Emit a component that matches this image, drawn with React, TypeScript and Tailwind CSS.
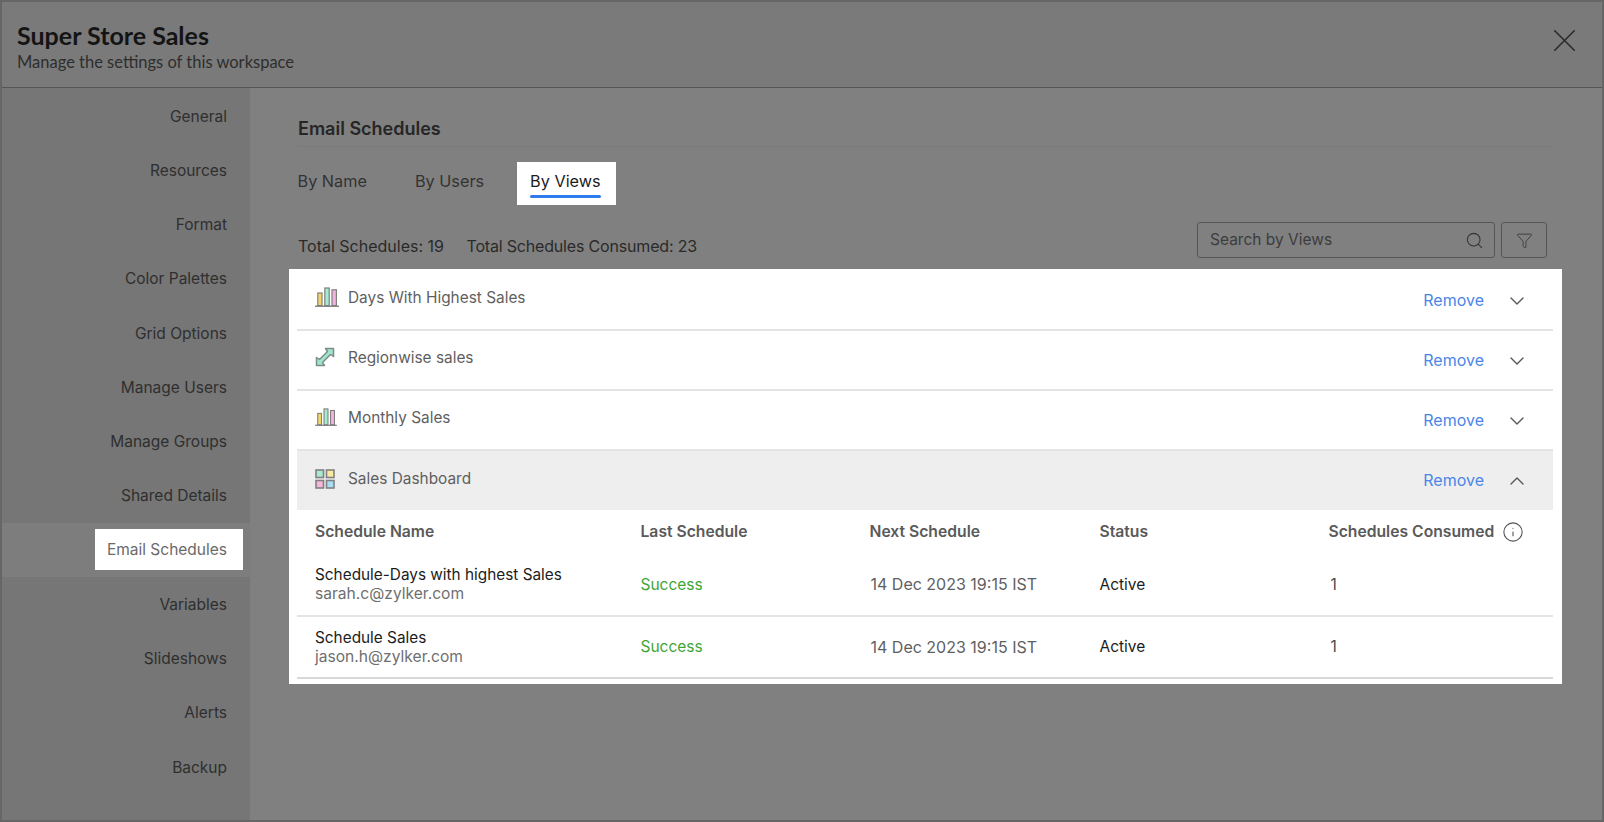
import { ChevronDown, ChevronUp, Funnel, Info, Search, X } from 'lucide-react'

const menu = ['General', 'Resources', 'Format', 'Color Palettes', 'Grid Options', 'Manage Users', 'Manage Groups', 'Shared Details', 'Email Schedules', 'Variables', 'Slideshows', 'Alerts', 'Backup']

function BarsIcon({ small }: { small?: boolean }) {
  return (
    <svg viewBox="0 0 24 20" className={small ? 'w-[22px] h-[18px]' : 'w-[24px] h-[20px]'}>
      <rect x="2.8" y="6" width="4.2" height="12.6" fill="#f4d76a" stroke="#808080" strokeWidth="1.2" />
      <rect x="9.8" y="1" width="4.4" height="17.6" fill="#a4ecd0" stroke="#808080" strokeWidth="1.2" />
      <rect x="17" y="2.8" width="4.4" height="15.8" fill="#f2b4dc" stroke="#808080" strokeWidth="1.2" />
      <path d="M0 19.2H24" stroke="#777" strokeWidth="1.3" />
    </svg>
  )
}

function ArrowIcon() {
  return (
    <svg viewBox="0 0 20 20" className="w-[20px] h-[20px]">
      <path d="M10.5 1.5H18.5V9.5L15.5 7.5L7.5 15.5L9.5 18.5H1.5V10.5L4.5 12.5L12.5 4.5Z" fill="#9fe6cc" stroke="#7c8c86" strokeWidth="1.5" strokeLinejoin="round" />
    </svg>
  )
}

function GridIcon() {
  return (
    <svg viewBox="0 0 20 20" className="w-[20px] h-[20px]">
      <rect x="1" y="1" width="7.5" height="7.5" fill="#a8ecd0" stroke="#808080" strokeWidth="1.6" />
      <rect x="11.5" y="1" width="7.5" height="7.5" fill="#f8e9a0" stroke="#808080" strokeWidth="1.6" />
      <rect x="1" y="11.5" width="7.5" height="7.5" fill="#f4b6dc" stroke="#808080" strokeWidth="1.6" />
      <rect x="11.5" y="11.5" width="7.5" height="7.5" fill="#a9dcf5" stroke="#808080" strokeWidth="1.6" />
    </svg>
  )
}

const views = [
  { nombre: 'Days With Highest Sales', icono: <BarsIcon /> },
  { nombre: 'Regionwise sales', icono: <ArrowIcon /> },
  { nombre: 'Monthly Sales', icono: <BarsIcon small /> },
]

const schedules = [
  { nombre: 'Schedule-Days with highest Sales', email: 'sarah.c@zylker.com', borde: 'border-[#e4e4e4]' },
  { nombre: 'Schedule Sales', email: 'jason.h@zylker.com', borde: 'border-[#d8d8d8]' },
]

export default function App() {
  return (
    <div className="w-[1604px] h-[822px] flex flex-col border-2 border-[#666666] bg-[#808080] overflow-hidden font-[Inter,sans-serif] text-[15.5px]">
      {/* Cabecera */}
      <div className="h-[86px] shrink-0 flex items-center justify-between bg-[#7a7a7a] border-b border-[#555555] pl-[15px] pr-[18px]">
        <div className="font-[Lato,sans-serif] mt-[3px]">
          <div className="text-[25px] leading-[30px] mb-[2px] -mt-[1px] font-bold text-[#141414]">Super Store Sales</div>
          <div className="text-[16.5px] leading-[20px] text-[#2e2e2e]">Manage the settings of this workspace</div>
        </div>
        <X size={39} strokeWidth={1} className="text-[#2b2b2b] -mt-[8px]" />
      </div>

      <div className="flex flex-1 min-h-0">
        {/* Menú lateral */}
        <div className="w-[248px] shrink-0 bg-[#767676] pt-[1px]">
          {menu.map((m) =>
            m === 'Email Schedules' ? (
              <div key={m} className="h-[54.25px] flex items-center justify-end pr-[7px] bg-[#7d7d7d]">
                <div className="h-[41px] -mt-[1px] flex items-center bg-white pl-[12px] pr-[16px] text-[#6a6a6a]">{m}</div>
              </div>
            ) : (
              <div key={m} className="h-[54.25px] flex items-center justify-end pr-[23px] text-[#2f2f2f]">{m}</div>
            )
          )}
        </div>

        {/* Contenido */}
        <div className="flex-1 pl-[38px]">
          <div className="mt-[29px] h-[30px] w-[1256px] ml-[10px] leading-[24px] border-b border-[#7a7a7a] text-[18px] font-semibold text-[#262626]">Email Schedules</div>

          <div className="mt-[15px] ml-[-4px] h-[43px] flex gap-5">
            <div className="pl-[13.5px] pr-[14.5px] flex items-center text-[#333333] text-[16.25px] pb-[5px]">By Name</div>
            <div className="pl-[13.5px] pr-[12.5px] flex items-center text-[#333333] text-[16.25px] pb-[5px]">By Users</div>
            <div className="relative pl-[13.5px] pr-[15.5px] flex items-center bg-white text-[#1c1c1c] text-[16.25px] pb-[5px]">
              By Views
              <div className="absolute left-[13.5px] right-[15.5px] bottom-[7px] h-[3.5px] rounded-sm bg-[#2f7bf0]" />
            </div>
          </div>

          <div className="mt-[17px] ml-[10px] w-[1249px] h-[36px] flex items-end justify-between">
            <div className="flex gap-[22.5px] text-[16px] leading-[24px] text-[#2a2a2a]">
              <span>Total Schedules: 19</span>
              <span className="tracking-[-0.18px]">Total Schedules Consumed: 23</span>
            </div>
            <div className="flex gap-[6px]">
              <div className="w-[298px] h-[36px] flex items-center justify-between pl-[12px] pr-[10px] rounded-[3px] border-[1.5px] border-[#555555]">
                <span className="text-[#3c3c3c] text-[15.5px]">Search by Views</span>
                <Search size={19} strokeWidth={1.3} className="text-[#333333]" />
              </div>
              <div className="w-[46px] h-[36px] flex items-center justify-center rounded-[3px] border-[1.5px] border-[#555555]">
                <Funnel size={17} strokeWidth={1.3} className="text-[#3c3c3c]" />
              </div>
            </div>
          </div>

          {/* Panel de vistas */}
          <div className="mt-[11px] ml-[1px] w-[1273px] bg-white pl-[8px] pr-[9px] pt-[2px] pb-[5px]">
            {views.map((v) => (
              <div key={v.nombre} className="h-[60px] flex items-center border-b-2 border-[#e4e4e4] pl-[18px] pr-[24px]">
                <div className="w-[33px] flex -mt-[7px]">{v.icono}</div>
                <span className="-mt-[4px] text-[15.4px] text-[#5f5f5f]">{v.nombre}</span>
                <span className="ml-auto text-[16px] text-[#4a86e8]">Remove</span>
                <ChevronDown size={24} strokeWidth={1.35} className="ml-[21px] mt-[1px] text-[#555555]" />
              </div>
            ))}
            <div className="h-[59px] flex items-center bg-[#eeeeee] pl-[18px] pr-[24px]">
              <div className="w-[33px] flex -mt-[3px]"><GridIcon /></div>
              <span className="-mt-[4px] text-[15.4px] text-[#5f5f5f]">Sales Dashboard</span>
              <span className="ml-auto -mt-[1px] text-[16px] text-[#4a86e8]">Remove</span>
              <ChevronUp size={24} strokeWidth={1.35} className="ml-[21px] text-[#555555]" />
            </div>

            <div className="h-[44px] grid grid-cols-[325.5px_229px_230px_229px_1fr] items-center pl-[18px] text-[15.7px] font-semibold text-[#5a5a5a]">
              <span>Schedule Name</span>
              <span>Last Schedule</span>
              <span>Next Schedule</span>
              <span>Status</span>
              <span className="flex items-center gap-[8px]">
                Schedules Consumed
                <Info size={22} strokeWidth={1.2} className="text-[#555555]" />
              </span>
            </div>
            {schedules.map((s) => (
              <div key={s.email} className={`h-[62.5px] grid grid-cols-[325.5px_229px_230px_229px_1fr] items-center pl-[18px] border-b-2 ${s.borde}`}>
                <div className="leading-[19px]">
                  <div className="text-[15.35px] text-[#1c1c1c]">{s.nombre}</div>
                  <div className="text-[15.6px] text-[#6f6f6f]">{s.email}</div>
                </div>
                <span className="text-[#3fa535]">Success</span>
                <span className="ml-[1px] text-[16px] text-[#5f5f5f]">14 Dec 2023 19:15 IST</span>
                <span className="text-[#1c1c1c]">Active</span>
                <span className="ml-[2px] text-[#4a4a4a]">1</span>
              </div>
            ))}
          </div>
        </div>
      </div>
    </div>
  )
}
